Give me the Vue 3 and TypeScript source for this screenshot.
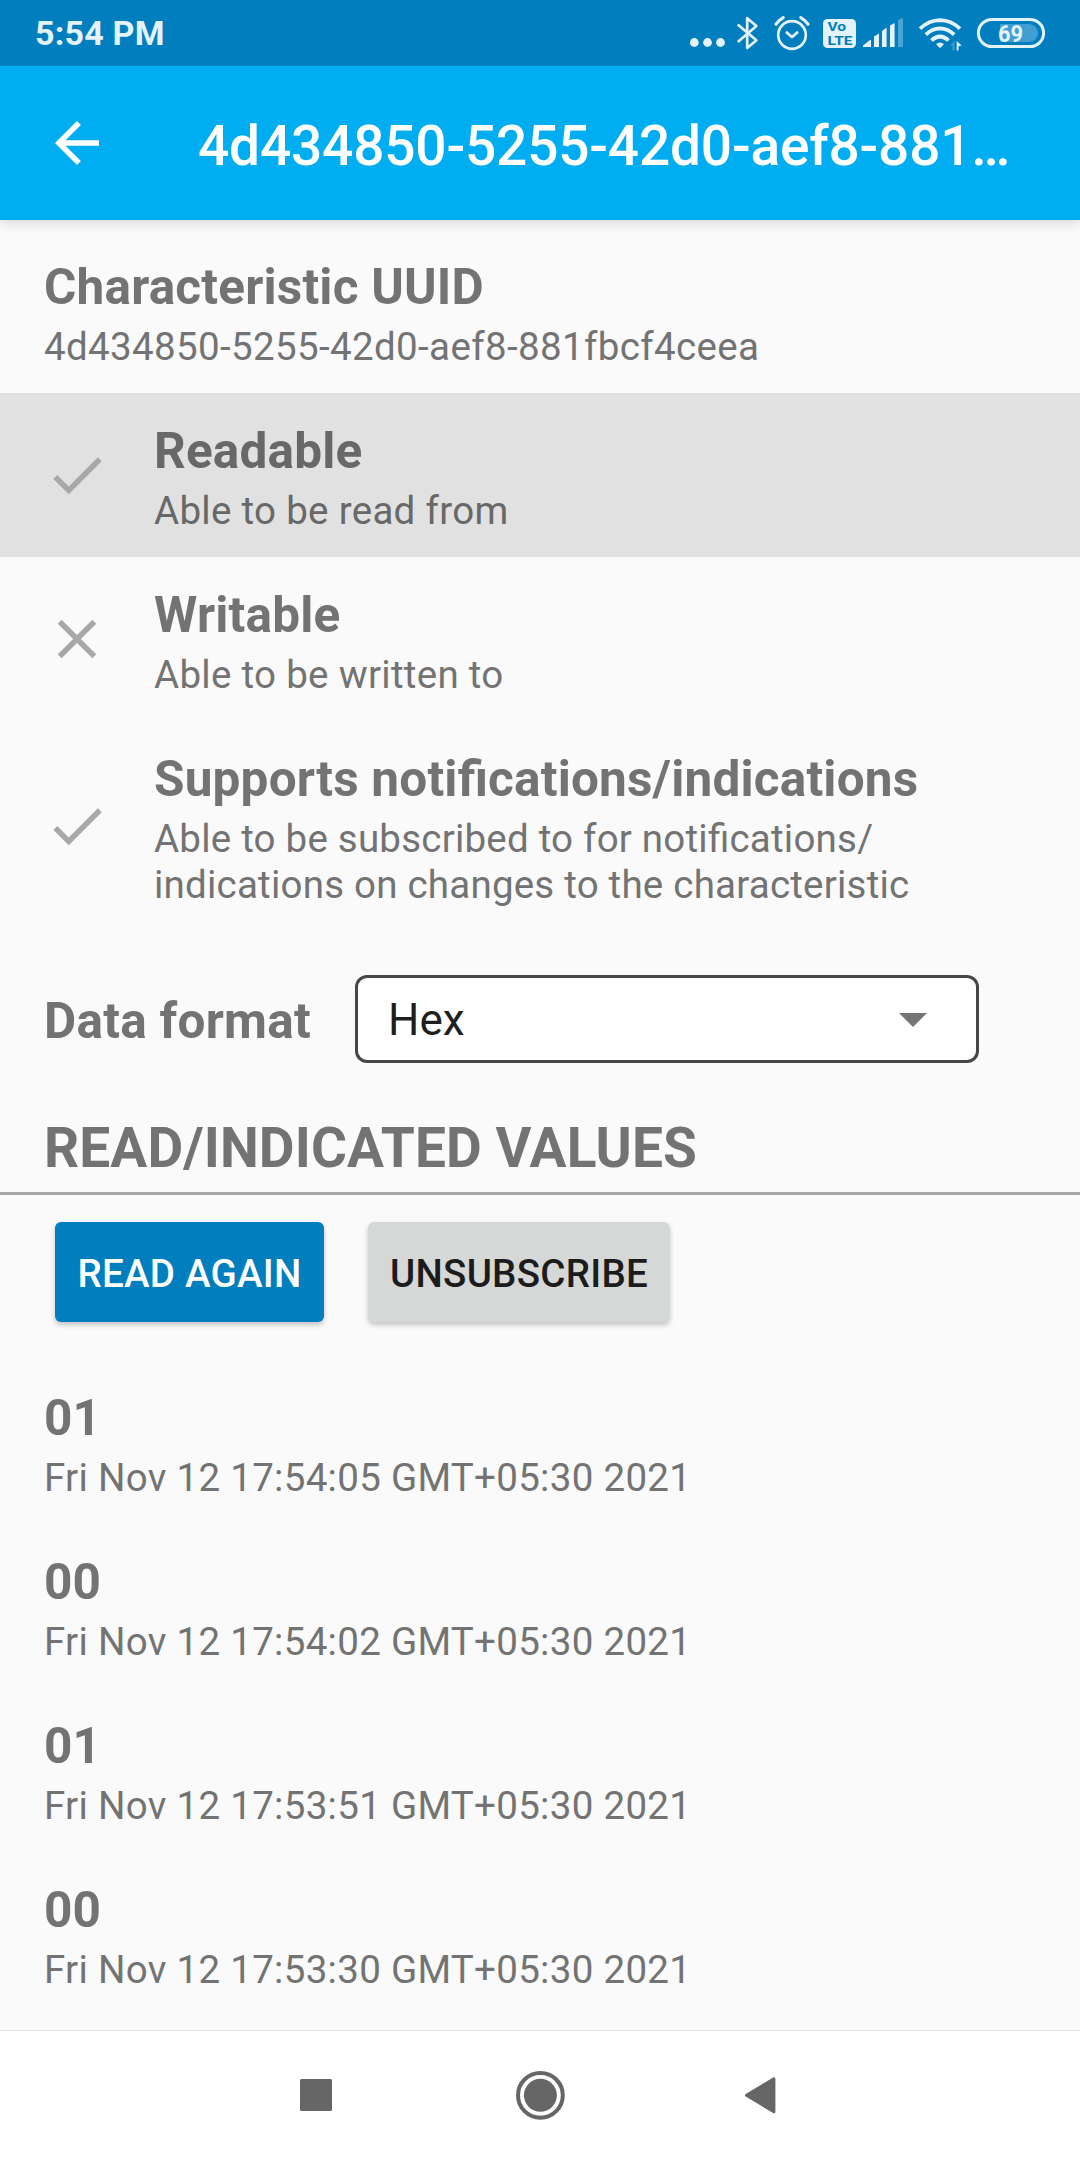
<script setup lang="ts">
import { computed, ref } from 'vue'

interface Property {
  title: string
  detail: string
  supported: boolean
  pressed?: boolean
  multiline?: boolean
}

interface Reading {
  value: string
  time: string
}

const uuid = '4d434850-5255-42d0-aef8-881fbcf4ceea'
const format = ref('Hex')
const maxTitleChars = 27
const shortTitle = computed(() => uuid.slice(0, maxTitleChars) + '…')

const properties: Property[] = [
  { title: 'Readable', detail: 'Able to be read from', supported: true, pressed: true },
  { title: 'Writable', detail: 'Able to be written to', supported: false },
  {
    title: 'Supports notifications/indications',
    detail: 'Able to be subscribed to for notifications/\nindications on changes to the characteristic',
    supported: true,
    multiline: true,
  },
]

const readings: Reading[] = [
  { value: '01', time: 'Fri Nov 12 17:54:05 GMT+05:30 2021' },
  { value: '00', time: 'Fri Nov 12 17:54:02 GMT+05:30 2021' },
  { value: '01', time: 'Fri Nov 12 17:53:51 GMT+05:30 2021' },
  { value: '00', time: 'Fri Nov 12 17:53:30 GMT+05:30 2021' },
]

const checkPath = 'M9 16.17L4.83 12l-1.42 1.41L9 19 21 7l-1.41-1.41z'
const closePath =
  'M19 6.41L17.59 5 12 10.59 6.41 5 5 6.41 10.59 12 5 17.59 6.41 19 12 13.41 17.59 19 19 17.59 13.41 12z'
</script>

<template>
  <div class="screen">
    <header class="status-bar">
      <span class="clock">5:54 PM</span>
      <div class="status-icons">
        <!-- more notifications -->
        <svg width="40" height="66" viewBox="8 0 40 66">
          <g fill="#e3f2fb">
            <circle cx="14.3" cy="42.5" r="4.4" />
            <circle cx="27.5" cy="42.5" r="4.4" />
            <circle cx="40.5" cy="42.5" r="4.4" />
          </g>
        </svg>
        <!-- bluetooth -->
        <svg width="38" height="66" viewBox="48 0 38 66">
          <path d="M58.6 25.3L76.4 40.2L67.2 48V18.2L76.4 26L58.6 41.2" fill="none" stroke="#e3f2fb" stroke-width="2.7" stroke-linecap="round" stroke-linejoin="round" />
        </svg>
        <!-- alarm -->
        <svg width="50" height="66" viewBox="86 0 50 66">
          <g fill="none" stroke="#e3f2fb" stroke-linecap="round">
            <circle cx="112" cy="35" r="13.8" stroke-width="2.7" />
            <path d="M106.8 32.6l5.2 4.4 5.2-4.4" stroke-width="2.8" stroke-linejoin="round" />
            <path d="M96 24.2q3-4.2 7.2-6.6M128 24.2q-3-4.2-7.2-6.6" stroke-width="3.2" />
          </g>
        </svg>
        <!-- VoLTE -->
        <svg width="44" height="66" viewBox="136 0 44 66">
          <rect x="143" y="19" width="33" height="29" rx="4.5" fill="#e3f2fb" />
          <text x="147.4" y="31" class="volte" textLength="18.6" lengthAdjust="spacingAndGlyphs">Vo</text>
          <text x="147.6" y="44.7" class="volte" textLength="25" lengthAdjust="spacingAndGlyphs">LTE</text>
        </svg>
        <!-- cellular signal -->
        <svg width="50" height="66" viewBox="180 0 50 66">
          <g fill="#e3f2fb">
            <path d="M183 47v-1.4l7-5.6q1-.6 1 .6V47z" />
            <path d="M194 47V36.6l5-3.2V47z" />
            <path d="M202 47V31l4.6-3.4V47z" />
            <path d="M210 47V25.5l4.6-2.5V47z" />
          </g>
          <path d="M218 47V20l5-2V47z" fill="#4aa5d5" />
        </svg>
        <!-- wifi -->
        <svg width="60" height="66" viewBox="230 0 60 66">
          <g fill="none" stroke="#e3f2fb" stroke-width="3.8">
            <path d="M240 28.6Q249 20.4 260 20.2Q271 20.4 280 28.6" />
            <path d="M245.8 34.7Q252 28.6 260 28.4Q268 28.6 274.2 34.7" />
            <path d="M251.5 40.5Q255.5 36.6 260 36.5Q264.5 36.6 268.5 40.5" />
          </g>
          <path d="M260 48.3l-4-4.2q4-3 8 0z" fill="#e3f2fb" />
          <path d="M274.7 50.5v-10l-4.2 4.8 2 .4v4.8z" fill="#3a9bcf" />
          <path d="M276.7 41v9.6h1.8v-4.4l3.2-.6z" fill="#e3f2fb" />
        </svg>
        <!-- battery -->
        <svg width="110" height="66" viewBox="290 0 110 66">
          <path d="M320 24h29a9 9 0 0 1 0 18h-29z" fill="#409fd0" />
          <rect x="298.4" y="19.4" width="65.2" height="27.2" rx="13.6" fill="none" stroke="#e3f2fb" stroke-width="3" />
          <text x="318" y="41.5" class="battery" textLength="25" lengthAdjust="spacingAndGlyphs">69</text>
        </svg>
      </div>
    </header>

    <div class="app-bar">
      <svg width="66" height="66" viewBox="0 0 24 24">
        <path d="M20 11H7.83l5.59-5.59L12 4l-8 8 8 8 1.41-1.41L7.83 13H20v-2z" fill="#fff" />
      </svg>
      <h1 class="app-title">{{ shortTitle }}</h1>
    </div>

    <main class="content">
      <section class="item">
        <div class="item-text">
          <div class="item-title">Characteristic UUID</div>
          <div class="item-detail uuid">{{ uuid }}</div>
        </div>
      </section>

      <section v-for="p in properties" :key="p.title" class="item" :class="{ pressed: p.pressed }">
        <svg class="item-icon" width="66" height="66" viewBox="0 0 24 24">
          <path :d="p.supported ? checkPath : closePath" />
        </svg>
        <div class="item-text">
          <div class="item-title">{{ p.title }}</div>
          <div class="item-detail" :class="{ multiline: p.multiline }">{{ p.detail }}</div>
        </div>
      </section>

      <div class="format-row">
        <span class="format-label">Data format</span>
        <div class="select">
          <span>{{ format }}</span>
          <svg width="28" height="14" viewBox="0 0 28 14"><path d="M0 0h28l-14 14z" fill="#757575" /></svg>
        </div>
      </div>

      <h2 class="section-heading">READ/INDICATED VALUES</h2>

      <div class="actions">
        <button class="btn primary">READ AGAIN</button>
        <button class="btn plain">UNSUBSCRIBE</button>
      </div>

      <section v-for="r in readings" :key="r.time" class="item">
        <div class="item-text">
          <div class="item-title">{{ r.value }}</div>
          <div class="item-detail">{{ r.time }}</div>
        </div>
      </section>
    </main>

    <nav class="nav-bar">
      <svg width="50" height="50" viewBox="0 0 50 50"><rect x="9" y="9" width="32" height="32" rx="1.5" fill="#666" /></svg>
      <svg width="50" height="50" viewBox="0 0 50 50">
        <circle cx="25.4" cy="25.3" r="22.4" fill="none" stroke="#666" stroke-width="4" />
        <circle cx="25.4" cy="25.3" r="16.5" fill="#666" />
      </svg>
      <svg width="50" height="50" viewBox="0 0 50 50">
        <path d="M7.5 25.3L34.9 8.8V41.8z" fill="#666" stroke="#666" stroke-width="3" stroke-linejoin="round" />
      </svg>
    </nav>
  </div>
</template>

<style>
body {
  margin: 0;
}
</style>

<style scoped>
.screen {
  width: 1080px;
  height: 2160px;
  display: flex;
  flex-direction: column;
  overflow: hidden;
  background: #fafafa;
  color: #737373;
  font-family: Roboto, sans-serif;
  font-feature-settings: "liga" 1;
}

svg {
  display: block;
  flex: none;
}

.status-bar {
  height: 66px;
  flex: none;
  display: flex;
  justify-content: space-between;
  align-items: center;
  padding-left: 35px;
  background: #007ebd;
  color: #e3f2fb;
}

.clock {
  font-size: 34px;
  line-height: 40px;
  font-weight: 700;
  letter-spacing: 0.2px;
}

.status-icons {
  display: flex;
}

.volte {
  font-size: 12.5px;
  font-weight: 700;
  fill: #007ebd;
}

.battery {
  font-size: 24px;
  font-weight: 700;
  fill: #e3f2fb;
}

.app-bar {
  height: 154px;
  flex: none;
  box-sizing: border-box;
  display: flex;
  align-items: center;
  padding: 0 44px;
  background: #00adf0;
  box-shadow: 0 3px 12px rgba(0, 0, 0, 0.14);
  clip-path: inset(0 0 -24px 0);
  z-index: 1;
}

.app-title {
  margin: 6px 0 0 88px;
  font-size: 55px;
  line-height: 64px;
  font-weight: 500;
  letter-spacing: -0.17px;
  color: #fff;
  white-space: nowrap;
}

.content {
  flex: 1;
  min-height: 0;
  padding-top: 9px;
  overflow: hidden;
}

.item {
  display: flex;
  align-items: center;
  padding: 29px 44px 23px;
}

.item-icon {
  margin: -3px 44px 3px 0;
  fill: #a8a8a8;
}

.item-title {
  font-size: 49.5px;
  line-height: 58px;
  font-weight: 700;
  letter-spacing: 0.19px;
}

.item-detail {
  margin-top: 8px;
  font-size: 38.5px;
  line-height: 46px;
  letter-spacing: 0.3px;
  white-space: pre-line;
}

.uuid {
  letter-spacing: 0.36px;
}

.multiline {
  letter-spacing: 0.22px;
}

.pressed {
  background: #e1e1e1;
  color: #686868;
}

.format-row {
  display: flex;
  align-items: center;
  margin: 44px 101px 0 44px;
  height: 88px;
}

.format-label {
  width: 311px;
  padding-top: 3px;
  font-size: 49.5px;
  line-height: 58px;
  font-weight: 700;
  letter-spacing: 0.26px;
}

.select {
  flex: 1;
  box-sizing: border-box;
  height: 88px;
  display: flex;
  align-items: center;
  justify-content: space-between;
  padding: 2px 49px 0 30px;
  border: 3px solid #464646;
  border-radius: 12px;
  background: #fff;
  color: #1f1f1f;
  font-size: 44px;
  line-height: 52px;
}

.section-heading {
  margin: 0;
  padding: 53px 44px 12px;
  font-size: 55px;
  line-height: 64px;
  font-weight: 700;
  letter-spacing: 0.1px;
  border-bottom: 3px solid #a6a6a6;
}

.actions {
  display: flex;
  gap: 44px;
  padding: 27px 55px 38px;
}

.btn {
  height: 100px;
  padding: 2px 0 0;
  border: 0;
  border-radius: 6px;
  font-family: inherit;
  font-size: 38.5px;
  font-weight: 500;
  letter-spacing: 0.28px;
  box-shadow: 0 3px 5px rgba(0, 0, 0, 0.22);
}

.primary {
  width: 269px;
  background: #007ebd;
  color: #fff;
}

.plain {
  width: 302px;
  background: #d6d8d7;
  color: #1c1c1c;
}

.nav-bar {
  height: 130px;
  flex: none;
  box-sizing: border-box;
  display: flex;
  justify-content: center;
  align-items: center;
  gap: 174px;
  padding-bottom: 2px;
  border-top: 1px solid #e2e2e2;
  background: #fff;
}
</style>
